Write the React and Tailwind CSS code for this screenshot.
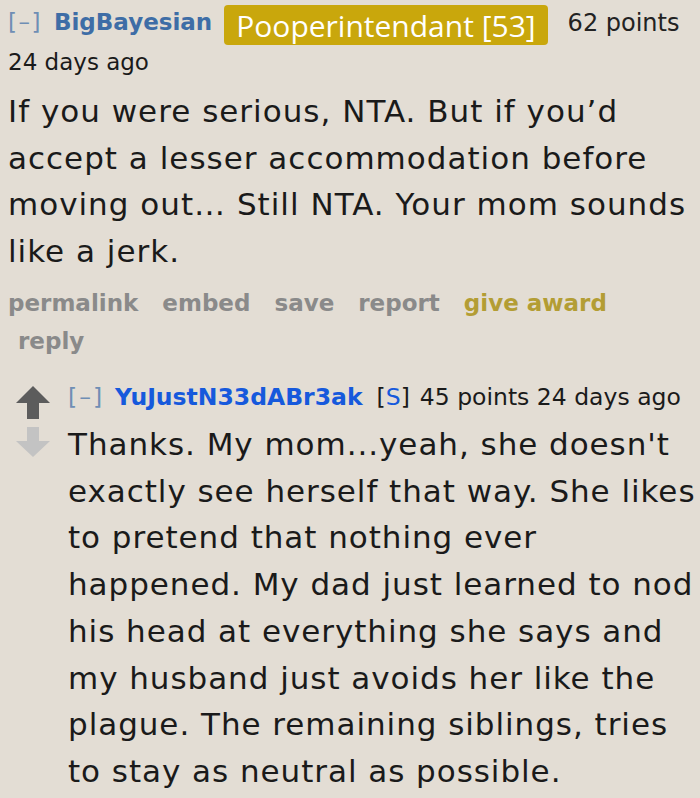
import React from 'react';

const ArrowUp = ({ color }) => (
  <svg width="34" height="33" viewBox="0 0 34 33">
    <path d="M17 0 L34 17 L23 17 L23 33 L11 33 L11 17 L0 17 Z" fill={color} />
  </svg>
);

const ArrowDown = ({ color }) => (
  <svg width="34" height="30" viewBox="0 0 34 30">
    <path d="M11 0 L23 0 L23 14 L34 14 L17 30 L0 14 L11 14 Z" fill={color} />
  </svg>
);

const parentLines = [
  'If you were serious, NTA. But if you’d',
  'accept a lesser accommodation before',
  'moving out… Still NTA. Your mom sounds',
  'like a jerk.',
];

const childLines = [
  "Thanks. My mom...yeah, she doesn't",
  'exactly see herself that way. She likes',
  'to pretend that nothing ever',
  'happened. My dad just learned to nod',
  'his head at everything she says and',
  'my husband just avoids her like the',
  'plague. The remaining siblings, tries',
  'to stay as neutral as possible.',
];

const App = () => {
  return (
    <div className="w-[700px] h-[798px] overflow-hidden bg-[#e3ddd4] text-[#1a1a1a]" style={{ fontFamily: '"DejaVu Sans", Verdana, sans-serif' }}>
      {/* Parent comment */}
      <div className="pl-2 pt-[5px]">
        <div className="flex items-center h-[40px] text-[23px]">
          <span className="text-[#6f8eb4] -mt-[5px] tracking-[1.5px]">[–]</span>
          <span className="ml-3 font-bold text-[#3e6da6] -mt-[5px]">BigBayesian</span>
          <span className="ml-3 px-3 h-[40px] flex items-center rounded bg-[#c9a70c] text-white text-[30px]" style={{ fontFamily: '"Open Sans", sans-serif' }}>Pooperintendant [53]</span>
          <span className="ml-5 -mt-[5px] text-[24px] text-[#222]">62 points</span>
        </div>
        <div className="text-[23px] mt-[5px] leading-[24px]">24 days ago</div>
        <div className="mt-[14px] text-[31px] leading-[46.5px] tracking-[1px]">
          {parentLines.map((l) => (
            <div key={l} className="whitespace-nowrap">{l}</div>
          ))}
        </div>
        <div className="mt-[10px] flex flex-wrap gap-x-6 text-[23px] font-bold text-[#8a8a8a] leading-[38px]">
          <span>permalink</span>
          <span>embed</span>
          <span>save</span>
          <span>report</span>
          <span className="text-[#b39d34]">give award</span>
          <span className="ml-[10px] basis-full">reply</span>
        </div>
      </div>

      {/* Child comment */}
      <div className="flex mt-[23px] pl-[16px]">
        <div className="flex flex-col shrink-0 gap-[8px] pt-[3px] w-[52px]">
          <ArrowUp color="#5c5c5c" />
          <ArrowDown color="#c3c3c3" />
        </div>
        <div className="flex-1 min-w-0">
          <div className="text-[23.5px] leading-[28px] whitespace-nowrap">
            <span className="text-[#6f8eb4] tracking-[2px]">[–]</span>
            <span className="ml-[11px] font-bold text-[#1659dc]">YuJustN33dABr3ak</span>
            <span className="ml-[14px]">[<span className="text-[#1659dc]">S</span>]</span>
            <span className="ml-[10px]">45 points 24 days ago</span>
          </div>
          <div className="mt-[10px] text-[31px] leading-[46.7px] tracking-[0.95px]">
            {childLines.map((l) => (
              <div key={l} className="whitespace-nowrap">{l}</div>
            ))}
          </div>
        </div>
      </div>
    </div>
  );
};

export default App;
